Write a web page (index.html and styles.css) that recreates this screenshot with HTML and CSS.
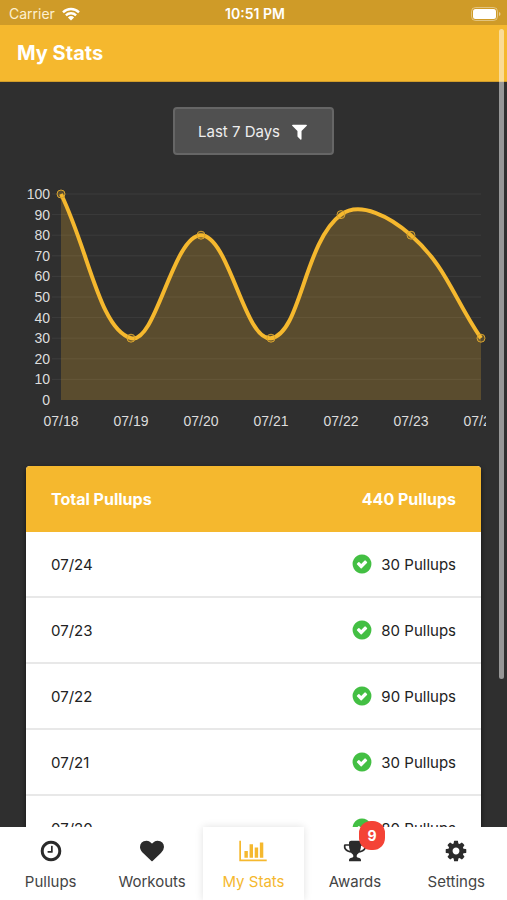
FILE: index.html
```html
<!DOCTYPE html>
<html lang="en">
<head>
  <meta charset="UTF-8">
  <meta name="viewport" content="width=device-width, initial-scale=1">
  <title>My Stats</title>
  <link rel="stylesheet" href="styles.css">
</head>
<body>
  <svg class="defs" aria-hidden="true">
    <symbol id="check" viewBox="0 0 1792 1792">
      <path d="M1299 813l-422 422q-19 19-45 19t-45-19l-294-294q-19-19-19-45t19-45l102-102q19-19 45-19t45 19l147 147 275-275q19-19 45-19t45 19l102 102q19 19 19 45t-19 45zm365 83q0-209-103-385.500t-279.500-279.500-385.500-103-385.500 103-279.500 279.500-103 385.500 103 385.500 279.500 279.500 385.500 103 385.500-103 279.500-279.500 103-385.500z" fill-rule="evenodd"/>
    </symbol>
  </svg>

  <div class="status">
    <div class="carrier">
      Carrier
      <svg class="wifi" viewBox="0 0 18 14">
        <path d="M1 5.300a11.500 11.500 0 0 1 16 0M3.900 8.300a7.400 7.400 0 0 1 10.200 0" fill="none" stroke="#fff" stroke-width="2.400"/>
        <path d="M9 13.500L5.900 10.400a4.500 4.500 0 0 1 6.200 0z" fill="#fff"/>
      </svg>
    </div>
    <div class="time">10:51 PM</div>
    <svg class="battery" viewBox="0 0 30 14">
      <rect x="0.500" y="0.500" width="26" height="13" rx="4" fill="none" stroke="#fff" stroke-opacity="0.4"/>
      <rect x="2" y="2" width="23" height="10" rx="2.500" fill="#fff"/>
      <path d="M28 5v4q1.500-0.500 1.500-2t-1.500-2z" fill="#fff" fill-opacity="0.5"/>
    </svg>
  </div>

  <header>
    <h1>My Stats</h1>
  </header>

  <main>
    <button type="button" class="filter">
      Last 7 Days
      <svg viewBox="0 0 1792 1792"><path d="M1595 295q17 41-14 70l-493 493v742q0 42-39 59-13 5-25 5-27 0-45-19l-256-256q-19-19-19-45v-486l-493-493q-31-29-14-70 17-39 59-39h1280q42 0 59 39z"/></svg>
    </button>

    <svg class="chart" id="chart" viewBox="0 0 460 256" role="img" aria-label="Pullups per day"></svg>

    <table class="card">
      <thead>
        <tr><th>Total Pullups</th><th>440 Pullups</th></tr>
      </thead>
      <tbody>
        <tr><td>07/24</td><td><div class="count"><svg class="check"><use href="#check"/></svg>30 Pullups</div></td></tr>
        <tr><td>07/23</td><td><div class="count"><svg class="check"><use href="#check"/></svg>80 Pullups</div></td></tr>
        <tr><td>07/22</td><td><div class="count"><svg class="check"><use href="#check"/></svg>90 Pullups</div></td></tr>
        <tr><td>07/21</td><td><div class="count"><svg class="check"><use href="#check"/></svg>30 Pullups</div></td></tr>
        <tr><td>07/20</td><td><div class="count"><svg class="check"><use href="#check"/></svg>80 Pullups</div></td></tr>
      </tbody>
    </table>
  </main>

  <nav class="tabs">
    <a href="#pullups">
      <svg class="icon" viewBox="0 0 1792 1792"><path d="M1024 544v448q0 14-9 23t-23 9h-320q-14 0-23-9t-9-23v-64q0-14 9-23t23-9h224v-352q0-14 9-23t23-9h64q14 0 23 9t9 23zm416 352q0-148-73-273t-198-198-273-73-273 73-198 198-73 273 73 273 198 198 273 73 273-73 198-198 73-273zm224 0q0 209-103 385.500t-279.500 279.500-385.500 103-385.500-103-279.500-279.500-103-385.500 103-385.500 279.500-279.500 385.500-103 385.500 103 279.500 279.500 103 385.500z"/></svg>
      Pullups
    </a>
    <a href="#workouts">
      <svg class="icon" viewBox="0 0 1792 1792"><path d="M896 1664q-26 0-44-18l-624-602q-10-8-27.500-26t-55.500-65.500-68-97.500-53.500-121-23.500-138q0-220 127-344t351-124q62 0 126.500 21.500t120 58 95.500 68.500 76 68q36-36 76-68t95.500-68.500 120-58 126.500-21.500q224 0 351 124t127 344q0 221-229 450l-623 600q-18 18-44 18z"/></svg>
      Workouts
    </a>
    <a href="#stats" class="active" aria-current="page">
      <svg class="icon wide" viewBox="0 0 2048 1792"><path d="M640 896v512h-256v-512h256zm384-512v1024h-256v-1024h256zm1024 1152v128h-2048v-1536h128v1408h1920zm-640-896v768h-256v-768h256zm384-384v1152h-256v-1152h256z"/></svg>
      My Stats
    </a>
    <a href="#awards">
      <svg class="icon" viewBox="0 0 1792 1792"><path d="M522 883q-74-162-74-371h-256v96q0 78 94.500 162t235.500 113zm1078-275v-96h-256q0 209-74 371 141-29 235.500-113t94.500-162zm128-128v128q0 71-41.500 143t-112 130-173 97.500-215.500 44.500q-42 54-95 95-38 34-52.500 72.500t-14.500 89.500q0 54 30.500 91t97.500 37q75 0 133.500 45.500t58.500 114.500v64q0 14-9 23t-23 9h-832q-14 0-23-9t-9-23v-64q0-69 58.500-114.500t133.500-45.500q67 0 97.500-37t30.500-91q0-51-14.500-89.500t-52.500-72.500q-53-41-95-95-113-5-215.500-44.500t-173-97.500-112-130-41.500-143v-128q0-40 28-68t68-28h288v-96q0-66 47-113t113-47h576q66 0 113 47t47 113v96h288q40 0 68 28t28 68z"/></svg>
      Awards
      <span class="badge">9</span>
    </a>
    <a href="#settings">
      <svg class="icon" viewBox="0 0 1792 1792"><path d="M1152 896q0-106-75-181t-181-75-181 75-75 181 75 181 181 75 181-75 75-181zm512-109v222q0 12-8 23t-20 13l-185 28q-19 54-39 91 35 50 107 138 10 12 10 25t-9 23q-27 37-99 108t-94 71q-12 0-26-9l-138-108q-44 23-91 38-16 136-29 186-7 28-36 28h-222q-14 0-24.500-8.500t-11.500-21.500l-28-184q-49-16-90-37l-141 107q-10 9-25 9-14 0-25-11-126-114-165-168-7-10-7-23 0-12 8-23 15-21 51-66.500t54-70.500q-27-50-41-99l-183-27q-13-2-21-12.500t-8-23.500v-222q0-12 8-23t19-13l186-28q14-46 39-92-40-57-107-138-10-12-10-24 0-10 9-23 26-36 98.500-107.500t94.500-71.500q13 0 26 10l138 107q44-23 91-38 16-136 29-186 7-28 36-28h222q14 0 24.500 8.500t11.500 21.500l28 184q49 16 90 37l142-107q9-9 24-9 13 0 25 10 129 119 165 170 7 8 7 22 0 12-8 23-15 21-51 66.500t-54 70.500q26 50 41 98l183 28q13 2 21 12.500t8 23.500z"/></svg>
      Settings
    </a>
  </nav>

  <div class="scrollbar"></div>

  <script src="chart.js"></script>
</body>
</html>
```

FILE: styles.css
```css
* {
  box-sizing: border-box;
}
body {
  margin: 0;
  height: 100vh;
  display: flex;
  flex-direction: column;
  position: relative;
  overflow: hidden;
  background: #2f2f2f;
  color: #222;
  font-family: Inter, "Liberation Sans", sans-serif;
  font-size: 15px;
}
.defs {
  display: none;
}
.status {
  flex: none;
  height: 25px;
  padding: 2px 6px 0 9px;
  display: grid;
  grid-template-columns: 1fr auto 1fr;
  align-items: center;
  background: #cf9b28;
  color: #fff;
  font-size: 14px;
}
.carrier {
  display: flex;
  align-items: center;
  gap: 7px;
  color: #fdf0d0;
}
.wifi {
  width: 18px;
  height: 14px;
}
.time {
  font-weight: 600;
}
.battery {
  width: 30px;
  height: 14px;
  justify-self: end;
}
header {
  flex: none;
  height: 57px;
  padding: 0 17px;
  display: flex;
  align-items: center;
  background: #f5b82e;
  border-bottom: 1px solid #d19d2a;
}
h1 {
  margin: 0;
  color: #fff;
  font-size: 20px;
  font-weight: 700;
}
main {
  flex: 1;
  min-height: 0;
  overflow: hidden;
  padding: 25px 26px 0;
}
.filter {
  display: flex;
  align-items: center;
  gap: 10px;
  height: 48px;
  margin: 0 auto 25px;
  padding: 0 23px;
  background: #505050;
  border: 2px solid #666;
  border-radius: 4px;
  color: #eee;
  font: inherit;
}
.filter svg {
  width: 19px;
  height: 19px;
  fill: #fff;
}
.chart {
  display: block;
  width: calc(100% + 5px);
  margin-bottom: 30px;
  font-family: "Liberation Sans", Arial, sans-serif;
  font-size: 14px;
  fill: #ddd;
}
.grid {
  stroke: #3c3c3c;
}
.area {
  fill: #f5b82e;
  fill-opacity: 0.22;
}
.line {
  fill: none;
  stroke: #f5b82e;
  stroke-width: 4;
}
.point {
  fill: #f5b82e;
  fill-opacity: 0.2;
  stroke: #d9a42e;
}
.x-label {
  text-anchor: middle;
}
.y-label {
  text-anchor: end;
}
.card {
  width: 100%;
  border-spacing: 0;
  background: #fff;
  border-radius: 4px;
  overflow: hidden;
  box-shadow: 0 2px 5px rgba(0,0,0,0.6);
}
th, td {
  height: 66px;
  padding: 0 25px;
  text-align: left;
}
th {
  background: #f5b82e;
  color: #fff;
  font-size: 16px;
  font-weight: 700;
}
th:last-child {
  text-align: right;
}
td {
  border-bottom: 2px solid #e8e8e8;
}
.count {
  display: flex;
  align-items: center;
  justify-content: flex-end;
  gap: 8px;
}
.check {
  width: 22px;
  height: 22px;
  fill: #43bf43;
}
.tabs {
  flex: none;
  position: relative;
  height: 73px;
  display: grid;
  grid-template-columns: repeat(5, 1fr);
  background: #fff;
}
.tabs a {
  position: relative;
  display: flex;
  flex-direction: column;
  align-items: center;
  gap: 9px;
  padding-top: 12px;
  color: #444;
  text-decoration: none;
}
.tabs .active {
  color: #f5b82e;
  box-shadow: 0 0 8px rgba(0,0,0,0.12);
}
.icon {
  width: 24px;
  height: 24px;
  fill: #2b2b2b;
}
.icon.wide {
  width: 28px;
}
.active .icon {
  fill: #f5b82e;
}
.badge {
  position: absolute;
  top: -6px;
  left: 54%;
  width: 26px;
  height: 29px;
  border-radius: 12px;
  background: #f44336;
  color: #fff;
  font-size: 14px;
  font-weight: 700;
  line-height: 29px;
  text-align: center;
}
.scrollbar {
  position: absolute;
  top: 29px;
  right: 3px;
  width: 5px;
  height: 650px;
  border-radius: 3px;
  background: rgba(255,255,255,0.5);
}
```

FILE: chart.js
```js
const days = ["07/18", "07/19", "07/20", "07/21", "07/22", "07/23", "07/24"];
const values = [100, 30, 80, 30, 90, 80, 30];

const left = 35;
const right = 455;
const top0 = 14;
const bottom = 220;
const tension = 0.4;

const chart = document.getElementById("chart");

function add(tag, attrs, text) {
  const el = document.createElementNS("http://www.w3.org/2000/svg", tag);
  for (const key in attrs) el.setAttribute(key, attrs[key]);
  if (text !== undefined) el.textContent = text;
  chart.appendChild(el);
}

const points = values.map((v, i) => ({
  x: left + i * (right - left) / (values.length - 1),
  y: bottom - v * (bottom - top0) / 100
}));

// control points on both sides of each value
function controls(i) {
  const p = points[i];
  const prev = points[i - 1] || p;
  const next = points[i + 1] || p;
  const d1 = Math.hypot(p.x - prev.x, p.y - prev.y);
  const d2 = Math.hypot(next.x - p.x, next.y - p.y);
  const a = tension * d1 / (d1 + d2);
  const b = tension * d2 / (d1 + d2);
  return {
    before: [p.x - a * (next.x - prev.x), p.y - a * (next.y - prev.y)],
    after: [p.x + b * (next.x - prev.x), p.y + b * (next.y - prev.y)]
  };
}

let path = `M${points[0].x} ${points[0].y}`;
for (let i = 1; i < points.length; i++) {
  path += ` C${controls(i - 1).after} ${controls(i).before} ${points[i].x} ${points[i].y}`;
}

for (let v = 0; v <= 100; v += 10) {
  const y = bottom - v * (bottom - top0) / 100;
  if (v > 0) add("line", { class: "grid", x1: left - 9, x2: right, y1: y, y2: y });
  add("text", { class: "y-label", x: 24, y: y + 5 }, v);
}

add("path", { class: "area", d: `${path} V${bottom} H${left} Z` });
add("path", { class: "line", d: path });
points.forEach((p, i) => {
  add("circle", { class: "point", cx: p.x, cy: p.y, r: 4 });
  add("text", { class: "x-label", x: p.x, y: 246 }, days[i]);
});
```
